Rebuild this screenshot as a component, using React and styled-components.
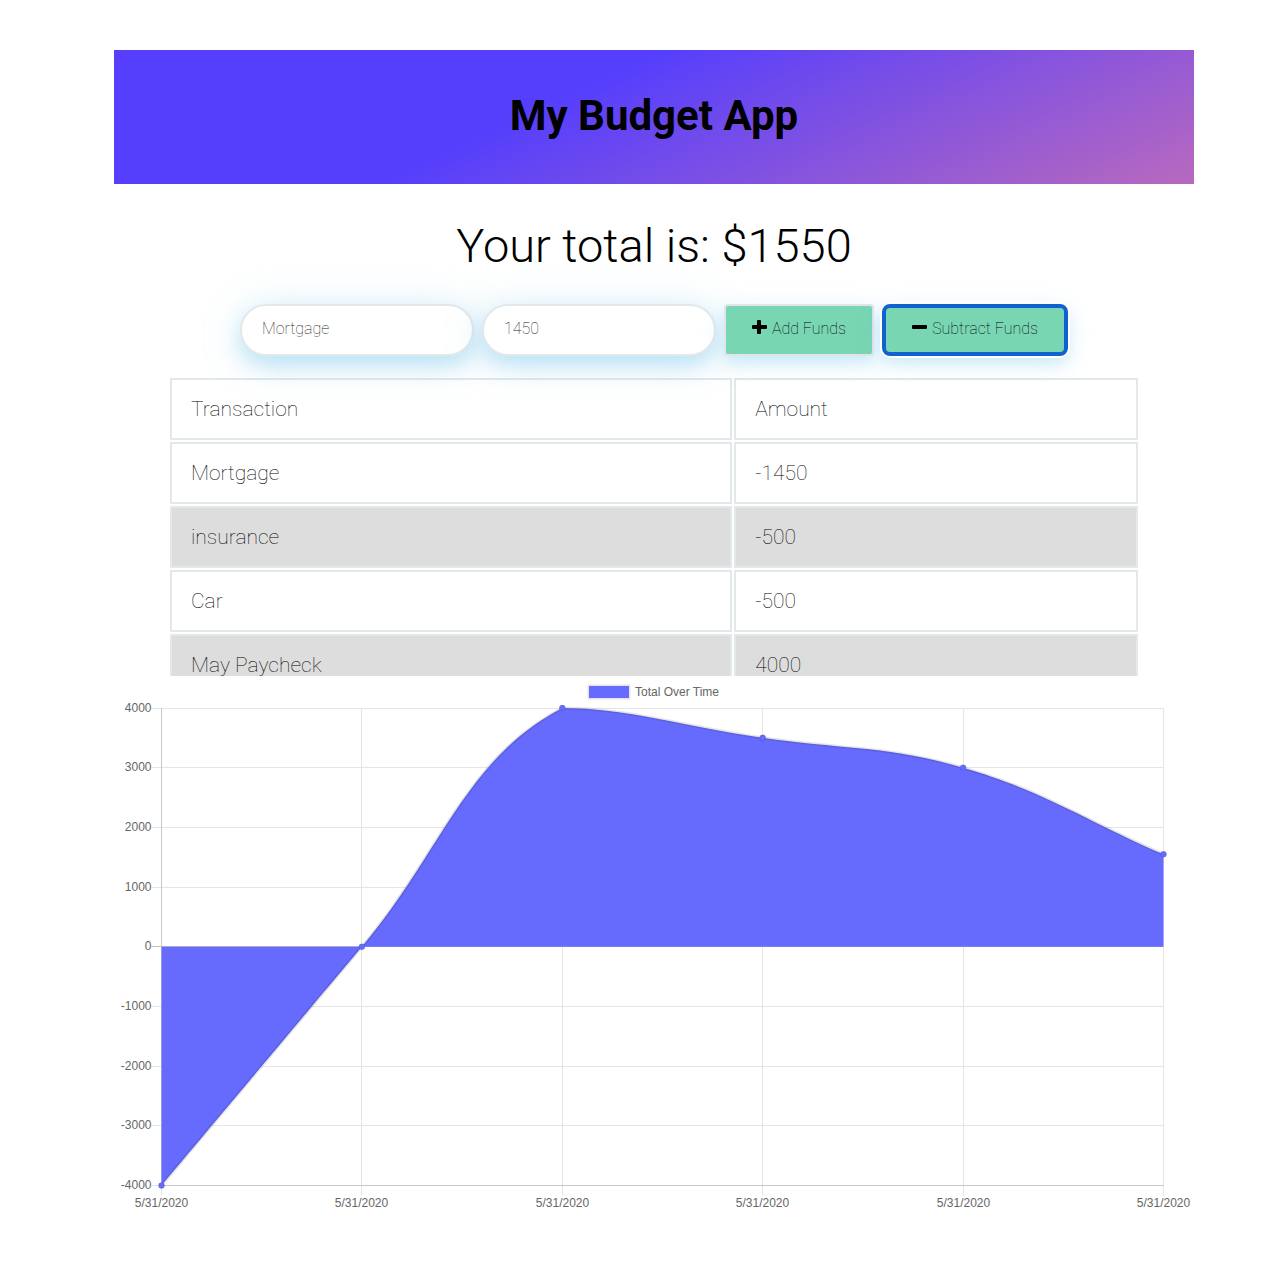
import React from "react";
import styled, { createGlobalStyle } from "styled-components";

const GlobalStyle = createGlobalStyle`
  *, *::before, *::after { box-sizing: border-box; }
  body {
    margin: 0;
    background: #fff;
    color: #000;
    font-family: Roboto, "Liberation Sans", sans-serif;
    font-weight: 100;
  }
`;

const Page = styled.main`
  padding: 50px 78px 72px 114px;
`;

const Banner = styled.header`
  padding: 35px 24px 37px;
  text-align: center;
  background: linear-gradient(155deg, #553ffd 40%, #b869be 100%);
`;

const Title = styled.h1`
  margin: 0;
  font-size: 42px;
  line-height: 62px;
  font-weight: 700;
`;

const Total = styled.h2`
  margin: 32px 0 28px;
  text-align: center;
  font-size: 47px;
  line-height: 60px;
  font-weight: 300;
`;

const Form = styled.form`
  display: flex;
  flex-wrap: wrap;
  justify-content: center;
  gap: 8px;
`;

const Field = styled.input`
  width: 234px;
  height: 52px;
  padding: 0 20px 4px;
  border: 2px solid #e3e8ea;
  border-radius: 26px;
  background: #fff;
  color: #222;
  font: inherit;
  font-size: 16px;
  outline: none;
  box-shadow: 0 10px 20px rgba(110, 195, 235, 0.35), 0 4px 40px rgba(110, 195, 235, 0.25);
`;

const buttonGlow = "0 8px 16px rgba(110, 195, 235, 0.3), 0 4px 32px rgba(110, 195, 235, 0.1)";

const Button = styled.button`
  display: flex;
  align-items: center;
  justify-content: center;
  gap: 5px;
  min-width: ${(p) => (p.$active ? 186 : 150)}px;
  height: 52px;
  padding: 0 16px 4px;
  border: ${(p) => (p.$active ? "4px solid #1062cf" : "2px solid #e3e3ea")};
  border-radius: ${(p) => (p.$active ? 8 : 4)}px;
  background: #78d6b2;
  color: #000;
  font: inherit;
  font-size: 16px;
  outline: none;
  box-shadow: ${(p) => (p.$active ? "0 0 0 2px #fff, " : "")}${buttonGlow};
`;

const Icon = styled.svg`
  width: 15px;
  height: 15px;
  flex: none;
  margin-bottom: 2px;
  fill: currentColor;
`;

const Scroller = styled.section`
  width: 90%;
  height: 300px;
  margin: 20px auto 0;
  overflow: auto;
  scrollbar-width: none;
`;

const Table = styled.table`
  width: 100%;
  border-collapse: separate;
  border-spacing: 2px;
  table-layout: fixed;
  font-size: 21px;
  line-height: 26px;
  text-align: left;
`;

const Row = styled.tr`
  background: ${(p) => (p.$shaded ? "#ddd" : p.$head ? "transparent" : "#fff")};
`;

const cell = `
  height: 62px;
  padding: 0 19px;
  border: 2px solid #e3e8ea;
  font-weight: 100;
`;
const HeadCell = styled.th`
  ${cell}
  width: ${(p) => p.$width};
`;
const Cell = styled.td`
  ${cell}
`;

const Chart = styled.svg`
  display: block;
  width: 100%;
  height: auto;
  font-family: "Liberation Sans", Arial, sans-serif;
  font-size: 12px;
  font-weight: 400;
`;

const transactions = [
  ["Mortgage", "-1450"],
  ["insurance", "-500"],
  ["Car", "-500"],
  ["May Paycheck", "4000"],
];

const totals = [-4000, 0, 4000, 3500, 3000, 1550];
const ticks = [4000, 3000, 2000, 1000, 0, -1000, -2000, -3000, -4000];
const area = { left: 47.5, right: 1049.5, top: 32, bottom: 509.5 };

const xAt = (i) => area.left + (i * (area.right - area.left)) / (totals.length - 1);
const yAt = (v) => area.top + ((4000 - v) * (area.bottom - area.top)) / 8000;
const clampY = (y) => Math.min(area.bottom, Math.max(area.top, y));

function controls(points, i, tension = 0.4) {
  const p = points[i];
  const prev = points[i - 1] || p;
  const next = points[i + 1] || p;
  const a = Math.hypot(p.x - prev.x, p.y - prev.y);
  const b = Math.hypot(next.x - p.x, next.y - p.y);
  const fa = (tension * a) / (a + b);
  const fb = (tension * b) / (a + b);
  const dx = next.x - prev.x;
  const dy = next.y - prev.y;
  return {
    before: [p.x - fa * dx, clampY(p.y - fa * dy)],
    after: [Math.min(area.right, p.x + fb * dx), clampY(p.y + fb * dy)],
  };
}

function TotalsChart() {
  const points = totals.map((v, i) => ({ x: xAt(i), y: yAt(v) }));
  const line = points.reduce((d, p, i) => {
    if (i === 0) return `M${p.x},${p.y}`;
    const c1 = controls(points, i - 1).after;
    const c2 = controls(points, i).before;
    return `${d} C${c1} ${c2} ${p.x},${p.y}`;
  }, "");
  const fill = `${line} L${area.right},${yAt(0)} L${area.left},${yAt(0)} Z`;

  return (
    <Chart viewBox="0 0 1080 540" role="img" aria-label="Total Over Time">
      <rect x="475" y="10" width="40" height="12" fill="#666bfd" stroke="#e5e5e5" strokeWidth="3" />
      <rect x="475" y="10" width="40" height="12" fill="#666bfd" />
      <text x="521" y="20" fill="#666">Total Over Time</text>
      {ticks.map((v) => {
        const y = Math.floor(yAt(v)) + 0.5;
        return (
          <g key={v}>
            <line x1={area.left - 10} x2={area.right} y1={y} y2={y} stroke={v === 0 ? "#bfbfbf" : "#e5e5e5"} />
            <text x="37.5" y={y + 3.5} textAnchor="end" fill="#666">{v}</text>
          </g>
        );
      })}
      {points.map((p, i) => {
        const x = Math.floor(p.x) + 0.5;
        return (
          <g key={i}>
            <line x1={x} x2={x} y1={area.top} y2={area.bottom + 10} stroke="#e5e5e5" />
            <text x={x} y="531" textAnchor="middle" fill="#666">5/31/2020</text>
          </g>
        );
      })}
      <path d={`M${area.left},${area.top} V${area.bottom} H${area.right}`} fill="none" stroke="#c8c8c8" />
      <path d={fill} fill="#666bfd" />
      <path d={line} fill="none" stroke="#000" strokeOpacity="0.1" strokeWidth="3" />
      {points.map((p, i) => (
        <circle key={i} cx={p.x} cy={p.y} r="3" fill="#666bfd" stroke="#000" strokeOpacity="0.1" />
      ))}
    </Chart>
  );
}

function PlusIcon() {
  return (
    <Icon viewBox="0 0 15 15" aria-hidden="true">
      <rect x="0" y="5" width="15" height="4" rx="1" />
      <rect x="5" y="0" width="4" height="14" rx="1" />
    </Icon>
  );
}

function MinusIcon() {
  return (
    <Icon viewBox="0 0 15 15" aria-hidden="true">
      <rect x="0" y="5" width="15" height="4" rx="1" />
    </Icon>
  );
}

export default function App() {
  return (
    <>
      <GlobalStyle />
      <Page>
        <Banner>
          <Title>My Budget App</Title>
        </Banner>
        <Total>Your total is: $1550</Total>
        <Form onSubmit={(e) => e.preventDefault()}>
          <Field aria-label="Transaction name" defaultValue="Mortgage" />
          <Field aria-label="Transaction amount" inputMode="numeric" defaultValue="1450" />
          <Button type="button"><PlusIcon />Add Funds</Button>
          <Button type="button" $active><MinusIcon />Subtract Funds</Button>
        </Form>
        <Scroller>
          <Table>
            <thead>
              <Row $head>
                <HeadCell scope="col" $width="58.2%">Transaction</HeadCell>
                <HeadCell scope="col">Amount</HeadCell>
              </Row>
            </thead>
            <tbody>
              {transactions.map(([name, amount], i) => (
                <Row key={name} $shaded={i % 2 === 1}>
                  <Cell>{name}</Cell>
                  <Cell>{amount}</Cell>
                </Row>
              ))}
            </tbody>
          </Table>
        </Scroller>
        <TotalsChart />
      </Page>
    </>
  );
}
